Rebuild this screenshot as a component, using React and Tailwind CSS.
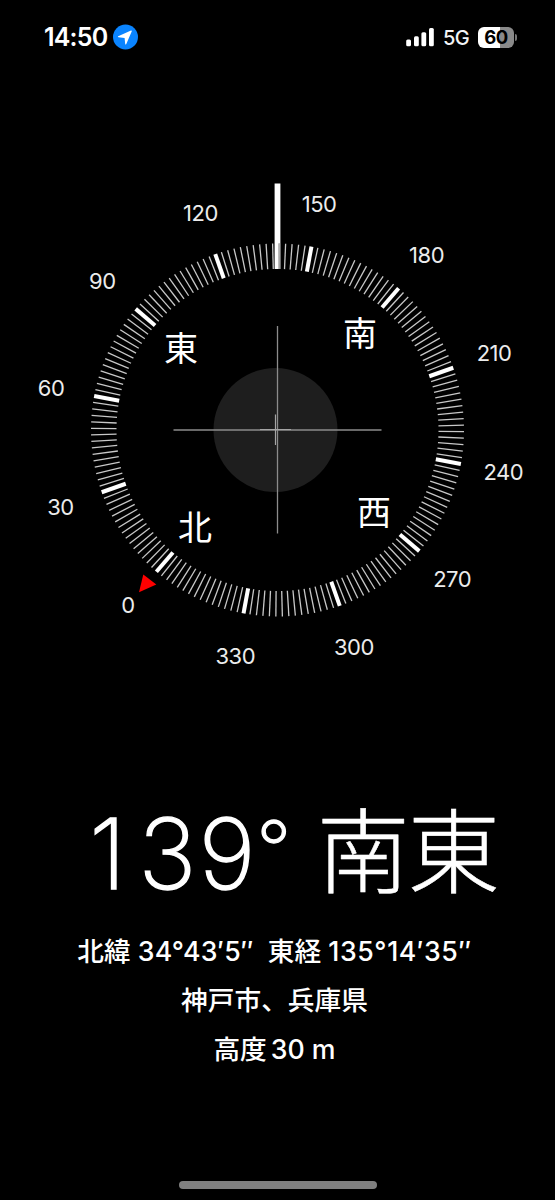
import React from 'react';

const HEADING = 139.5;
const CX = 277.5;
const CY = 430;

const TICKS = Array.from({ length: 180 }, (_, i) => i * 2);
const LABELS = Array.from({ length: 12 }, (_, i) => i * 30);

const CARDINALS = [
    { name: '北', deg: 0 },
    { name: '東', deg: 90 },
    { name: '南', deg: 180 },
    { name: '西', deg: 270 },
];

// Screen position of a bearing at a given distance from the dial centre
const polar = (deg, r) => {
    const a = ((deg - HEADING) * Math.PI) / 180;
    return { x: CX + r * Math.sin(a), y: CY - r * Math.cos(a) };
};

const StatusBar = () => (
    <header className="flex h-[74px] items-center justify-between pl-[44px] pr-[38px]">
        <div className="flex items-center gap-[5px]">
            <span className="w-[64px] whitespace-nowrap text-[25px] font-semibold leading-none tracking-[-0.8px]">14:50</span>
            <svg className="h-[26px] w-[26px]" viewBox="0 0 26 26">
                <circle cx="12.5" cy="13" r="12.5" fill="#0a84ff" />
                <path d="M18 6.6 L5.2 12.2 Q4.3 12.9 5.4 13.2 L11.6 13.9 L12.2 20.1 Q12.6 21.1 13.3 20.1 L18.8 7.3 Q18.9 6.4 18 6.6 Z" fill="#fff" />
            </svg>
        </div>
        <div className="flex items-center">
            <svg className="h-[20px] w-[30px]" viewBox="0 0 30 20">
                <rect x="0.2" y="12.6" width="4.8" height="6.6" rx="1.5" fill="#fff" />
                <rect x="8" y="9.2" width="4.8" height="10" rx="1.5" fill="#fff" />
                <rect x="15.4" y="5.2" width="4.8" height="14" rx="1.5" fill="#fff" />
                <rect x="23" y="1" width="4.8" height="18.2" rx="1.5" fill="#fff" />
            </svg>
            <span className="ml-[7px] w-[28px] whitespace-nowrap pt-[2px] text-[20px] font-medium leading-none tracking-[-0.7px] text-gray-100">5G</span>
            <div className="ml-[7px] flex items-center gap-[1px]">
                <div className="flex h-[21px] w-[36px] items-center justify-center rounded-[6px] bg-linear-to-r from-white from-60% to-[#8a8a8a] to-60%">
                    <span className="text-[18.5px] font-bold leading-none tracking-[-0.5px] text-black">60</span>
                </div>
                <div className="h-[7px] w-[2px] rounded-r-full bg-[#777]" />
            </div>
        </div>
    </header>
);

const Dial = () => (
    <svg className="absolute left-0 top-0 h-[720px] w-[555px]" viewBox="0 0 555 720">
        <circle cx="275.5" cy="430" r="62" fill="#1e1e1e" />
        <path d="M173.5 430 H381.5 M277.5 326 V533.5" stroke="#8c8c8c" strokeWidth="1.3" />
        <path d="M260 429.5 H291 M275.5 414.5 V445" stroke="#a5a5a5" strokeWidth="1.2" />

        <rect x="274.6" y="183.5" width="5.8" height="85.5" fill="#fff" />
        <rect x="278.4" y="243.5" width="2" height="25.5" fill="#777" />

        {TICKS.map((deg) => {
            const major = deg % 30 === 0;
            return (
                <line
                    key={deg}
                    x1={CX}
                    x2={CX}
                    y1={CY - 186.5}
                    y2={CY - 161}
                    transform={`rotate(${deg - HEADING} ${CX} ${CY})`}
                    stroke={major ? '#fff' : '#c8c8c8'}
                    strokeWidth={major ? 4 : 1.3}
                />
            );
        })}

        <path d="M143.3 574.5 L156.3 584.5 L139 592.3 Z" fill="#fe0000" />

        {LABELS.map((deg) => {
            const { x, y } = polar(deg, 230);
            return (
                <text key={deg} x={x - 0.3} y={y + 8} textAnchor="middle" fontSize="22" letterSpacing="-0.5" fill="#ececec">
                    {deg}
                </text>
            );
        })}
        {CARDINALS.map(({ name, deg }) => {
            const { x, y } = polar(deg, 127);
            return (
                <text key={deg} x={x} y={y + 13} textAnchor="middle" fontSize="34" fill="#fff">
                    {name}
                </text>
            );
        })}
    </svg>
);

const App = () => (
    <div className="relative flex h-[1200px] w-[555px] flex-col overflow-hidden bg-black font-['Inter','Noto_Sans_CJK_JP',sans-serif] text-white">
        <StatusBar />
        <div className="h-[724px]">
            <Dial />
        </div>
        <div className="flex h-[112px] items-center whitespace-nowrap pl-[89px] font-extralight">
            <div className="flex w-[228px] items-start text-[98px] leading-none [-webkit-text-stroke:1.3px_white]">
                <span className="tracking-[12px]">1</span>
                <span className="tracking-[2px]">3</span>
                <span className="tracking-[1px]">9</span>
                <span className="pt-[4px] text-[76px] leading-none">°</span>
            </div>
            <span className="pb-[4px] text-[92.5px] leading-none tracking-[-2px] [-webkit-text-stroke:0.5px_white]">南東</span>
        </div>
        <div className="flex flex-col items-center whitespace-nowrap pr-[6px] pt-[17px] text-[26.7px] font-medium leading-[49px]">
            <div className="flex gap-[14px]">
                <span>北緯 <span className="tracking-[0.2px]">34°43′5″</span></span>
                <span>東経 <span className="tracking-[0.6px]">135°14′35″</span></span>
            </div>
            <p>神戸市、兵庫県</p>
            <p className="flex gap-[4px]">
                <span>高度</span>
                <span>30 m</span>
            </p>
        </div>
        <div className="mb-[11px] ml-[179px] mt-auto h-[8px] w-[198px] rounded-full bg-[#808080]" />
    </div>
);

export default App;
